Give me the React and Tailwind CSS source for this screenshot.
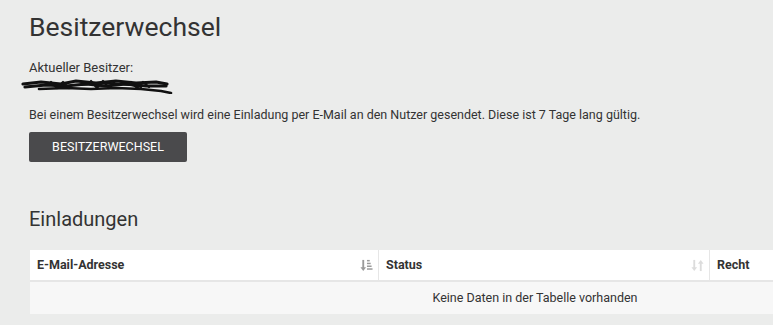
import React from 'react';

function SortAsc({ className }) {
    return (
        <svg viewBox="0 0 14 14" className={className} fill="currentColor">
            <rect x="2.5" y="1" width="2" height="9" />
            <path d="M0.5 9h6l-3 4z" />
            <rect x="7.5" y="1" width="3" height="1.6" />
            <rect x="7.5" y="4" width="4" height="1.6" />
            <rect x="7.5" y="7" width="5" height="1.6" />
            <rect x="7.5" y="10" width="6" height="1.6" />
        </svg>
    );
}

function SortBoth({ className }) {
    return (
        <svg viewBox="0 0 14 14" className={className} fill="currentColor">
            <rect x="2.5" y="1" width="2" height="9" />
            <path d="M0.5 9h6l-3 4z" />
            <rect x="9.5" y="4" width="2" height="9" />
            <path d="M7.5 5h6l-3-4z" />
        </svg>
    );
}

// redacted owner name
function Scribble() {
    return (
        <svg width="152" height="16" viewBox="0 0 152 16" className="block">
            <g stroke="#111" fill="none" strokeLinecap="round" strokeLinejoin="round">
                <path strokeWidth="3.2" d="M2 6 L20 4 L40 6 L55 3 L75 5 L95 3 L115 5 L135 4 L146 6" />
                <path strokeWidth="3.2" d="M4 9 L25 7 L45 8 L65 6 L85 8 L105 6 L125 8 L145 8" />
                <path strokeWidth="2.6" d="M18 11 L45 10 L70 11 L95 10 L120 11 L140 13 L150 15" />
                <path strokeWidth="2.2" d="M30 4 L36 10 L42 4 L48 10 M70 3 L76 10 L82 3 L88 10 L94 3 M110 4 L116 10 L122 4 L128 9" />
                <path strokeWidth="2.2" d="M60 7 C80 4 100 5 120 9" />
            </g>
        </svg>
    );
}

export default function App() {
    const cols = [
        { label: 'E-Mail-Adresse', w: 'w-[349px]', icon: <SortAsc className="w-[13px] h-[13px] text-[#9a9a9a]" /> },
        { label: 'Status', w: 'w-[331px]', icon: <SortBoth className="w-[13px] h-[13px] text-[#dcdcdc]" /> },
        { label: 'Recht', w: 'flex-1', icon: null },
    ];

    return (
        <div className="w-[773px] h-[325px] overflow-hidden bg-[#ebeceb] text-[#333] font-['Roboto',sans-serif]">
            <div className="pl-[29px] pt-[11px]">
                <h1 className="text-[26.5px] leading-[32px] font-normal text-[#333]">Besitzerwechsel</h1>

                <div className="mt-[17px] text-[13px] leading-[15px]">Aktueller Besitzer:</div>
                <div className="-ml-[8px] mt-[3px]">
                    <Scribble />
                </div>

                <p className="mt-[13px] text-[12.5px] leading-[15px]">
                    Bei einem Besitzerwechsel wird eine Einladung per E-Mail an den Nutzer gesendet. Diese ist 7 Tage lang gültig.
                </p>

                <button className="mt-[10px] w-[158px] h-[30px] rounded-[2px] bg-[#4a4a4c] text-white text-[12.5px] uppercase">
                    Besitzerwechsel
                </button>

                <h2 className="mt-[45px] text-[20px] leading-[24px] font-normal">Einladungen</h2>

                <div className="mt-[19px] ml-px w-[1010px]">
                    <div className="flex h-[32px] bg-white border-b-2 border-[#e6e6e6]">
                        {cols.map((c, i) => (
                            <div
                                key={c.label}
                                className={`${c.w} flex items-center justify-between pl-[7px] pr-[5px] ${i < 2 ? 'border-r border-[#e6e6e6]' : ''}`}
                            >
                                <span className="text-[12.5px] font-bold text-[#333]">{c.label}</span>
                                {c.icon}
                            </div>
                        ))}
                    </div>
                    <div className="h-[32px] bg-[#f7f7f7] flex items-center justify-center text-[12.5px]">
                        Keine Daten in der Tabelle vorhanden
                    </div>
                </div>
            </div>
        </div>
    );
}
